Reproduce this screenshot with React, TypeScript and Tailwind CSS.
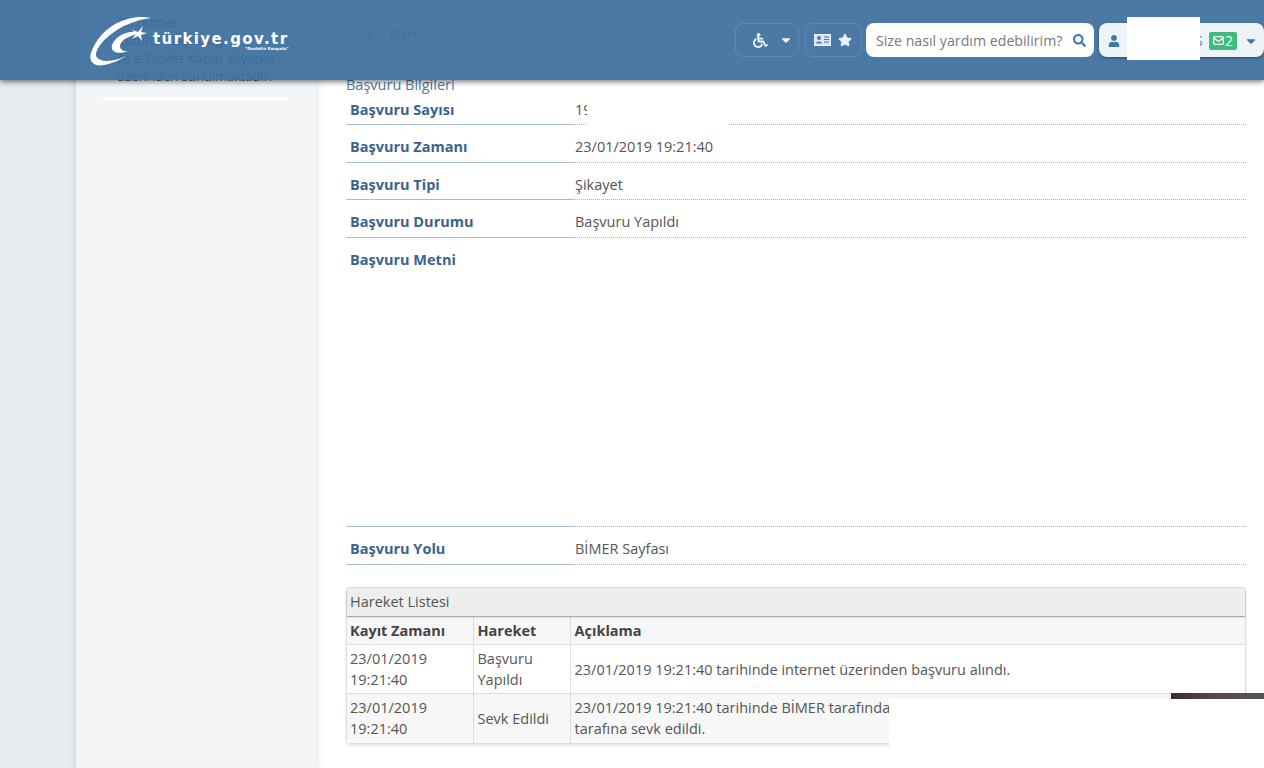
import { FaCaretDown, FaSearch, FaStar, FaUser, FaWheelchair } from "react-icons/fa";

const OPEN = "font-['Open_Sans',sans-serif]";

function Logo() {
  return (
    <div className="mt-[3px] flex items-start">
      <svg width="66" height="50" viewBox="0 0 66 50" className="shrink-0">
        <path d="M61 1C42 -3 12 6 1 36C-2 46 6 50 14 48C24 46 30 43 36 39C26 44 10 47 6 39C5 28 28 5 61 1Z" fill="#fff" />
        <path d="M52 16C40 12 26 18 22 28C20 35 28 38 38 34C32 35 28 31 31 26C34 21 42 18 52 16Z" fill="#fff" />
        <path d="M53 9l-2 6 6 1-6 2 1 6-4-5-6 3 4-5-4-4 6 2z" fill="#fff" />
      </svg>
      <div className="-ml-[3px] mt-[14px] flex flex-col items-end">
        <span className="font-['DejaVu_Sans',sans-serif] text-[15px] leading-[16px] font-bold tracking-[1.4px] text-white">
          türkiye.gov.tr
        </span>
        <span className="font-['DejaVu_Sans',sans-serif] text-[4px] leading-[4px] font-bold text-white">
          "Devletin Kısayolu"
        </span>
      </div>
    </div>
  );
}

function Header() {
  return (
    <header className="absolute top-0 left-0 flex h-20 w-full items-center justify-between bg-[#366a9b]/90 pl-[90px] shadow-[0_2px_5px_rgba(0,0,0,0.5)]">
      <Logo />
      <div className="flex items-center">
        <div className="flex h-[34px] w-[64px] items-center gap-[11px] rounded-[8px] border border-[#5d8ab1] pl-[17px]">
          <FaWheelchair className="text-[15px] text-[#eaf1f7]" />
          <FaCaretDown className="text-[14px] text-[#eaf1f7]" />
        </div>
        <div className="ml-[6px] flex h-[34px] w-[57px] items-center gap-[7px] rounded-[8px] border border-[#5d8ab1] pl-[8px]">
          <svg width="17" height="12" viewBox="0 0 17 12">
            <rect x="0.500" y="0.500" width="16" height="11" fill="#dbe7f0" stroke="#eaf1f7" />
            <circle cx="5" cy="4" r="2" fill="#4a79a5" />
            <path d="M2 9.500C2 6.800 8 6.800 8 9.500Z" fill="#4a79a5" />
            <path d="M10 3H15M10 5.500H15M10 8H15" stroke="#4a79a5" strokeWidth="1.100" />
          </svg>
          <FaStar className="text-[14px] text-[#eaf1f7]" />
        </div>
        <div className="ml-[4px] flex h-[34px] w-[228px] items-center justify-between rounded-[8px] bg-white pt-[1px] pr-[8px] pl-[10px]">
          <span className={`${OPEN} text-[14.200px] text-[#77797c]`}>Size nasıl yardım edebilirim?</span>
          <FaSearch className="text-[13px] text-[#3f79ab]" />
        </div>
        <div className="ml-[5px] flex h-[34px] w-[165px] items-center rounded-[8px] bg-[#eef3f8] pt-[1px] pl-[9px] shadow-[0_1px_3px_rgba(0,0,0,0.4)]">
          <FaUser className="text-[12px] text-[#3f79ab]" />
          <span className={`${OPEN} ml-[75px] w-[8px] text-[14px] text-[#5a7ea0]`}>S</span>
          <span className={`${OPEN} ml-[6px] flex h-[18px] w-[28px] items-center justify-center gap-[1px] rounded-[2px] bg-[#3dbd7d] text-[14px] text-white`}>
            <svg width="11" height="9" viewBox="0 0 11 9" fill="none" stroke="#fff" strokeWidth="1.300">
              <rect x="0.700" y="0.700" width="9.600" height="7.600" rx="1" />
              <path d="M1 2L5.500 5.500L10 2" />
            </svg>
            2
          </span>
          <FaCaretDown className="ml-[7px] text-[14px] text-[#3f79ab]" />
        </div>
      </div>
      <div className="absolute top-[17px] left-[1127px] h-[43px] w-[73px] bg-white" />
    </header>
  );
}

const labelClass = `${OPEN} w-[226px] border-b border-[#a7bfd1] pl-[4px] text-[14.500px] leading-[20px] font-bold text-[#3a638e]`;
const valueClass = `${OPEN} flex-1 border-b border-dotted border-[#a9b3ba] pl-[3px] text-[14.500px] leading-[20px] text-[#555555]`;

function Field({ label, value, first }: { label: string; value?: string; first?: boolean }) {
  return (
    <div className={first ? "flex h-[31px]" : "flex h-[37.500px]"}>
      <div className={`${labelClass} ${first ? "pt-[6px]" : "pt-[12px]"}`}>{label}</div>
      <div className={`${valueClass} ${first ? "pt-[6px]" : "pt-[12px]"}`}>{value}</div>
    </div>
  );
}

const cell = "border-t border-l border-[#dddddd] px-[4px] align-middle";

function MovementTable() {
  return (
    <section className={`${OPEN} mt-[22.500px] rounded-[4px] border border-[#dddddd] text-[14.500px] leading-[21px] text-[#555555] shadow-[0_2px_3px_rgba(0,0,0,0.1)]`}>
      <h2 className="relative h-[28px] rounded-t-[4px] bg-[#eeeeef] pt-[3px] pl-[3px] font-normal shadow-[0_1px_2px_rgba(0,0,0,0.3)]">Hareket Listesi</h2>
      <table className="w-full border-collapse">
        <tbody>
          <tr className="h-[28px] bg-[#f7f7f7] font-bold text-[#444444]">
            <td className={`${cell} w-[126px] border-l-0 pl-[3px]`}>Kayıt Zamanı</td>
            <td className={`${cell} w-[97px]`}>Hareket</td>
            <td className={cell}>Açıklama</td>
          </tr>
          <tr className="h-[49px]">
            <td className={`${cell} border-l-0 pl-[3px]`}>23/01/2019<br />19:21:40</td>
            <td className={cell}>Başvuru<br />Yapıldı</td>
            <td className={cell}>23/01/2019 19:21:40 tarihinde internet üzerinden başvuru alındı.</td>
          </tr>
          <tr className="h-[49px] bg-[#f7f7f7]">
            <td className={`${cell} border-l-0 pl-[3px]`}>23/01/2019<br />19:21:40</td>
            <td className={cell}>Sevk Edildi</td>
            <td className={cell}>23/01/2019 19:21:40 tarihinde BİMER tarafından<br />tarafına sevk edildi.</td>
          </tr>
        </tbody>
      </table>
    </section>
  );
}

export default function App() {
  return (
    <div className="relative flex h-[768px] w-full overflow-hidden bg-white">
      <div className="h-full w-[76px] shrink-0 bg-[#e8ecef]" />
      <aside className="h-full w-[240px] shrink-0 bg-[#f3f5f7] pt-[13px] shadow-[0_0_8px_rgba(0,0,0,0.15)]">
        <div className={`${OPEN} mr-[27px] ml-[26px] border-b-2 border-white pb-[13px] pl-[15px] text-[13.500px] leading-[18px] font-light text-[#222222]`}>
          <p>Bu hizmet</p>
          <p>Cumhurbaşkanlığı</p>
          <p>ile e-Devlet Kapısı altyapısı</p>
          <p>üzerinden sunulmaktadır.</p>
        </div>
      </aside>
      <main className="min-w-0 flex-1 pt-[18px] pr-[18px] pl-[30px]">
        <button className={`${OPEN} ml-[12px] flex h-[33px] w-[64px] items-center gap-[16px] rounded-[3px] border border-[#c5d0da] pb-[1px] pl-[9px] text-[13.500px] text-[#6f8498]`}>
          <svg width="6" height="10" viewBox="0 0 6 10" fill="none" stroke="#8094a8" strokeWidth="1.500"><path d="M5 1L1 5L5 9" /></svg>
          Geri
        </button>
        <h1 className={`${OPEN} mt-[25px] text-[14.500px] leading-[18px] font-normal text-[#4e7ba3]`}>Başvuru Bilgileri</h1>
        <Field first label="Başvuru Sayısı" value="19" />
        <Field label="Başvuru Zamanı" value="23/01/2019 19:21:40" />
        <Field label="Başvuru Tipi" value="Şikayet" />
        <Field label="Başvuru Durumu" value="Başvuru Yapıldı" />
        <div className="flex h-[289.500px]">
          <div className={`${labelClass} pt-[12px]`}>Başvuru Metni</div>
          <div className="flex-1 border-b border-dotted border-[#a9b3ba]" />
        </div>
        <Field label="Başvuru Yolu" value="BİMER Sayfası" />
        <MovementTable />
      </main>
      <div className="absolute top-[100px] left-[587px] h-[25px] w-[142px] bg-white" />
      <div className="absolute top-[699px] left-[889px] h-[69px] w-[375px] bg-white" />
      <div className="absolute top-[693px] left-[1171px] h-[6px] w-[93px] bg-[linear-gradient(90deg,#3a2c30,#5a4a48_50%,#555555)]" />
      <Header />
    </div>
  );
}
